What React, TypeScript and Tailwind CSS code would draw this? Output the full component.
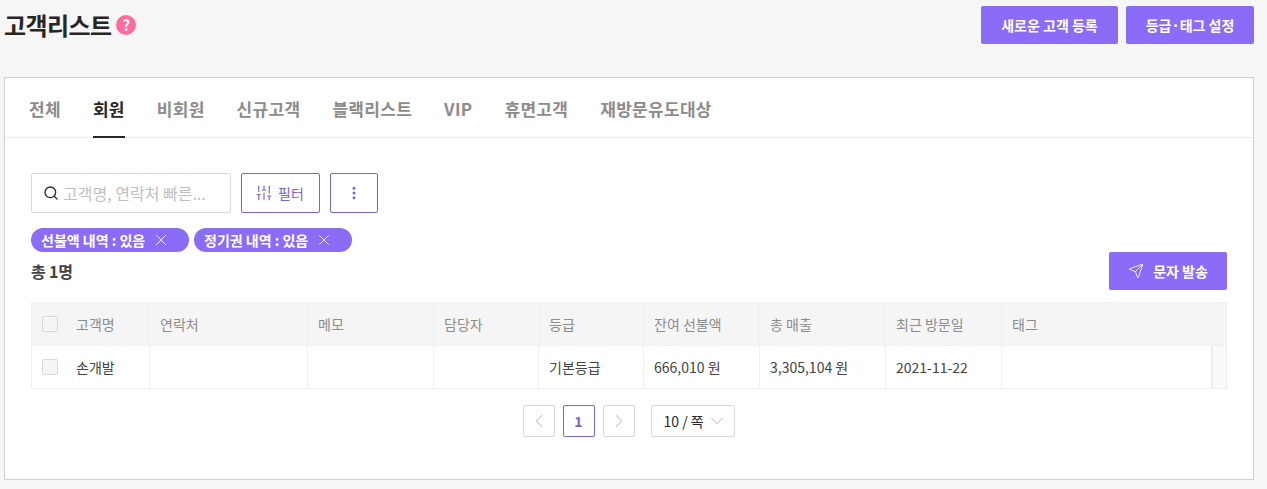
import React from 'react';
import { ChevronDown, ChevronLeft, ChevronRight, EllipsisVertical, Search, Send, SlidersVertical, X } from 'lucide-react';

const tabs = ['전체', '회원', '비회원', '신규고객', '블랙리스트', 'VIP', '휴면고객', '재방문유도대상'];
const filters = ['선불액 내역 : 있음', '정기권 내역 : 있음'];

const columns = [
  { label: '연락처', value: '', width: 'w-[158px]' },
  { label: '메모', value: '', width: 'w-[126px]' },
  { label: '담당자', value: '', width: 'w-[105px]' },
  { label: '등급', value: '기본등급', width: 'w-[105px]' },
  { label: '잔여 선불액', value: '666,010 원', width: 'w-[116px]' },
  { label: '총 매출', value: '3,305,104 원', width: 'w-[126px]' },
  { label: '최근 방문일', value: '2021-11-22', width: 'w-[116px]' },
];

const Checkbox = () => <span className="block h-4 w-4 rounded-[2px] border border-[#d9d9d9] bg-[#f5f5f5]" />;

export default function App() {
  return (
    <div className="h-[489px] w-[1267px] overflow-hidden bg-[#f6f6f7] pl-1 pr-[13px] font-['Noto_Sans_CJK_KR','Noto_Sans',sans-serif] text-[#262626]">
      <header className="flex h-[77px] items-start justify-between">
        <div className="flex h-[50px] items-center gap-[5px]">
          <h1 className="text-2xl font-bold tracking-[-0.6px] text-[#262626]">고객리스트</h1>
          <span className="flex h-5 w-5 items-center justify-center rounded-full bg-[#ff6b9d] text-[15px] font-bold text-white">?</span>
        </div>
        <div className="mt-1.5 flex gap-2">
          <button className="h-[38px] w-[137px] rounded-[2px] bg-[#8b6cf6] text-sm font-bold text-white">새로운 고객 등록</button>
          <button className="h-[38px] w-[128px] rounded-[2px] bg-[#8b6cf6] text-sm font-bold text-white">등급·태그 설정</button>
        </div>
      </header>

      <main className="h-[403px] border border-[#d0d0d0] bg-white">
        <nav className="flex h-[60px] gap-8 border-b border-[#eeeeee] pl-6">
          {tabs.map((tab) => (
            <div
              key={tab}
              className={`flex h-[60px] items-center border-b-2 pt-[3px] text-[17px] font-bold tracking-[0.3px] ${
                tab === '회원' ? 'border-[#262626] text-[#262626]' : 'border-transparent text-[#8c8c8c]'
              }`}
            >
              {tab}
            </div>
          ))}
        </nav>

        <div className="px-[26px] pt-[35px]">
          <div className="flex h-10 gap-2.5">
            <div className="flex w-[200px] items-center gap-1 rounded-[2px] border border-[#d9d9d9] pl-[11px]">
              <Search size={16} strokeWidth={2} className="text-[#262626]" />
              <span className="text-base text-[#bfbfbf]">고객명, 연락처 빠른...</span>
            </div>
            <button className="flex w-[79px] items-center justify-center gap-[5px] rounded-[2px] border border-[#7b62d0] pr-[2px] text-sm text-[#7b62d0]">
              <SlidersVertical size={18} strokeWidth={1.5} />
              필터
            </button>
            <button className="flex w-[48px] items-center justify-center rounded-[2px] border border-[#7b62d0] text-[#7b62d0]">
              <EllipsisVertical size={16} strokeWidth={2.5} />
            </button>
          </div>

          <div className="mt-[15px] flex gap-[5px]">
            {filters.map((filter) => (
              <span key={filter} className="flex h-6 w-[158px] items-center justify-between rounded-full bg-[#8b6cf6] pl-2.5 pr-[19px] text-sm font-bold text-white">
                {filter}
                <X size={18} strokeWidth={1.1} />
              </span>
            ))}
          </div>

          <div className="flex h-[50px] items-start justify-between">
            <span className="mt-[7px] text-base font-bold tracking-[-0.2px] text-[#434343]">총 1명</span>
            <button className="flex h-[38px] w-[118px] items-center justify-center gap-[9px] rounded-[2px] bg-[#8b6cf6] text-sm font-bold text-white">
              <Send size={16} strokeWidth={1.25} />
              문자 발송
            </button>
          </div>

          <div className="text-sm">
            <div className="flex h-[44px] border-y border-[#f0f0f0] bg-[#f5f5f5] text-[#8c8c8c]">
              <div className="flex w-[119px] items-center gap-[18px] border-x border-[#f0f0f0] pl-[10px]">
                <Checkbox />
                고객명
              </div>
              {columns.map((col) => (
                <div key={col.label} className={`flex items-center border-r border-[#efefef] pl-[10px] ${col.width}`}>{col.label}</div>
              ))}
              <div className="flex flex-1 items-center border-r border-[#f0f0f0] pl-[10px]">태그</div>
            </div>
            <div className="flex h-[43px] border-b border-[#f0f0f0] text-[#434343]">
              <div className="flex w-[119px] items-center gap-[18px] border-x border-[#f0f0f0] pl-[10px]">
                <Checkbox />
                손개발
              </div>
              {columns.map((col) => (
                <div key={col.label} className={`flex items-center border-r border-[#f0f0f0] pl-[10px] ${col.width}`}>{col.value}</div>
              ))}
              <div className="w-[211px] border-r-2 border-[#ececec]" />
              <div className="flex-1 border-r border-[#f0f0f0] bg-[#fafafa]" />
            </div>
          </div>

          <div className="mt-4 flex justify-center gap-2 pr-[1px] text-sm">
            <span className="flex h-8 w-8 items-center justify-center rounded-[2px] border border-[#d9d9d9] text-[#bfbfbf]">
              <ChevronLeft size={22} strokeWidth={1.1} />
            </span>
            <span className="flex h-8 w-8 items-center justify-center rounded-[2px] border border-[#7b62d0] font-bold text-[#7b62d0]">1</span>
            <span className="flex h-8 w-8 items-center justify-center rounded-[2px] border border-[#d9d9d9] text-[#bfbfbf]">
              <ChevronRight size={22} strokeWidth={1.1} />
            </span>
            <span className="ml-2 flex h-8 w-[84px] items-center justify-between rounded-[2px] border border-[#d9d9d9] pl-3 pr-[6px] text-[#262626]">
              10 / 쪽
              <ChevronDown size={22} strokeWidth={1.1} className="text-[#bfbfbf]" />
            </span>
          </div>
        </div>
      </main>
    </div>
  );
}
